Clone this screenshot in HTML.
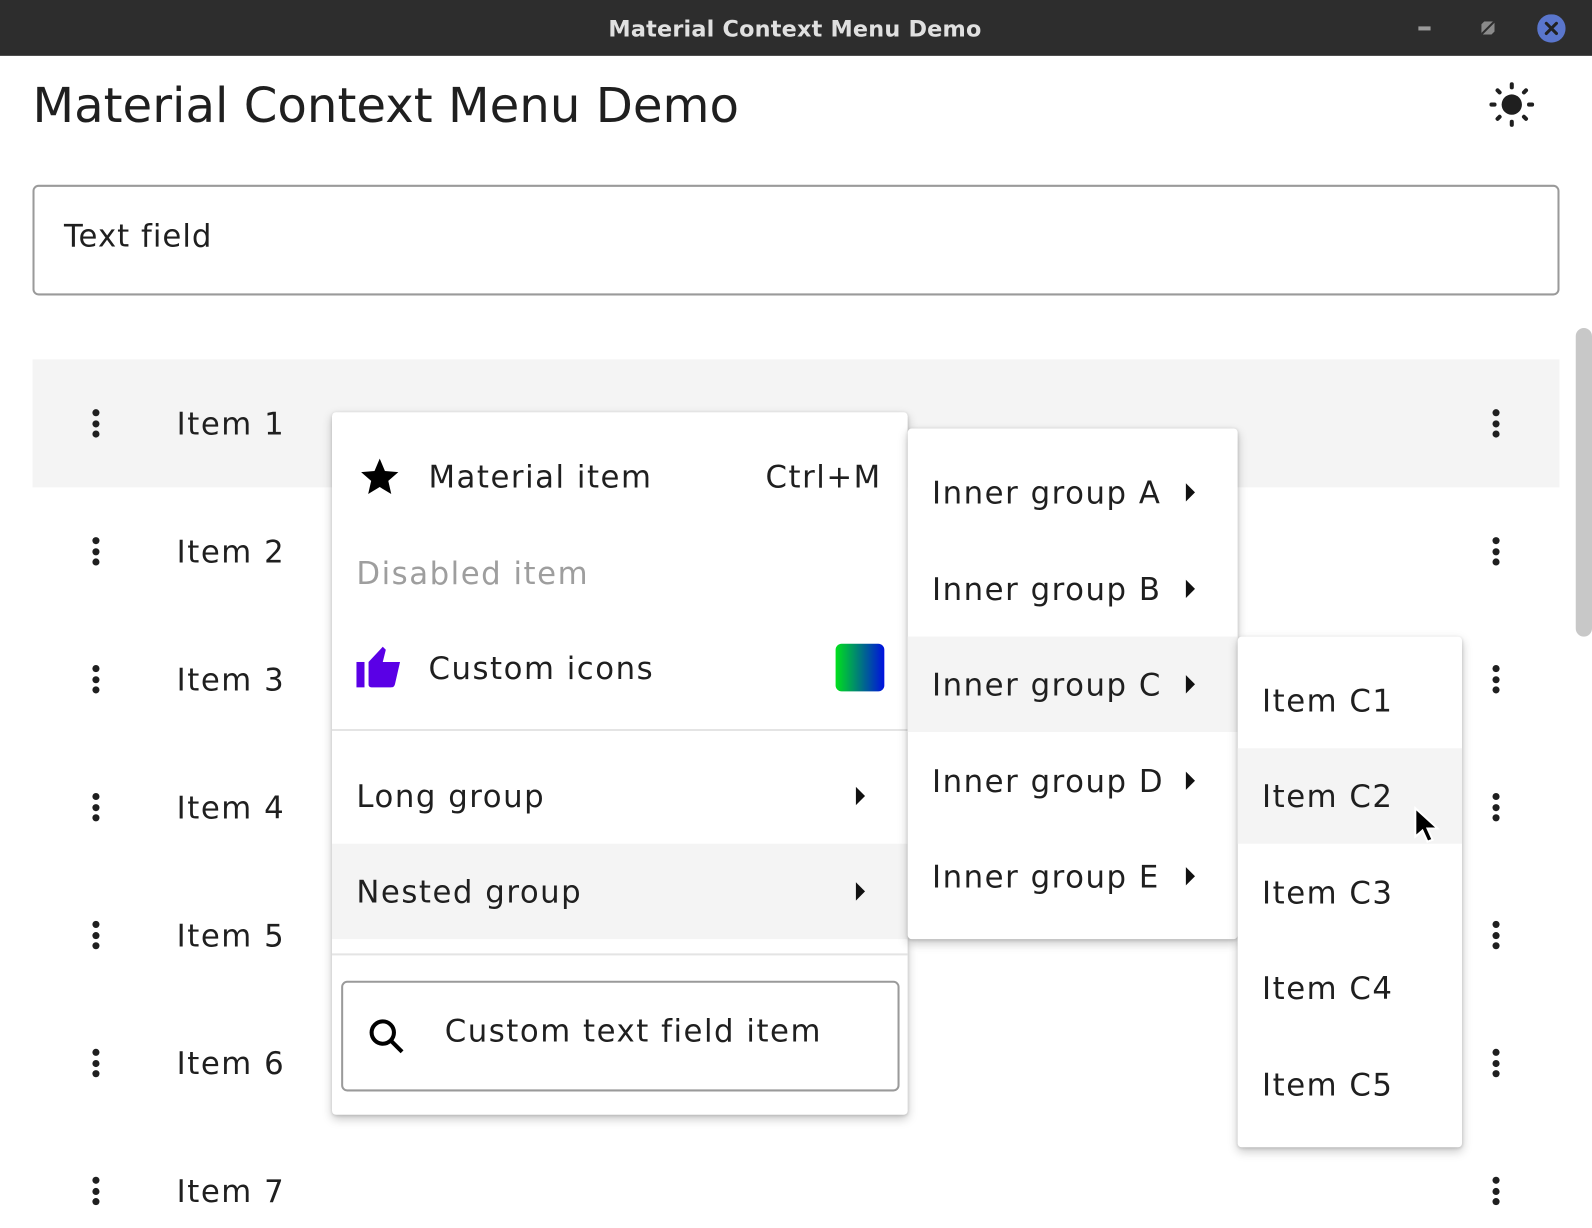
<!DOCTYPE html>
<html><head><style>
*{margin:0;padding:0;box-sizing:border-box}
html,body{width:1592px;height:1228px;overflow:hidden;background:#fff}
body{font-family:"DejaVu Sans","Liberation Sans",sans-serif;color:#1f1f1f;position:relative}
#w{position:absolute;left:0;top:0;width:1568px;height:1210px;transform:scale(1.0153);transform-origin:0 0}
.a{position:absolute}
.t{font-size:30.3px;letter-spacing:1.5px;white-space:nowrap;margin-top:3px}
.row{position:absolute;left:32px;width:1504px;height:126px}
.keb{position:absolute;width:8px}
.keb i{display:block;width:7px;height:7px;border-radius:50%;background:#1f1f1f;margin:0 0 3.5px}
.menu{position:absolute;background:#fff;border-radius:4px;box-shadow:0 4px 10px rgba(0,0,0,.22),0 1px 3px rgba(0,0,0,.15)}
.arr{position:absolute;width:0;height:0;border-top:9px solid transparent;border-bottom:9px solid transparent;border-left:9px solid #111}
</style></head><body><div id="w">
<div class="a" style="left:0;top:0;width:1600px;height:55px;background:#2d2d2d;"></div>
<div class="a" style="left:0;top:17px;width:1566px;text-align:center;color:#e0e0e0;font-size:22px;font-weight:bold;letter-spacing:.2px">Material Context Menu Demo</div>
<div class="a" style="left:1397px;top:26px;width:12px;height:4px;background:#9a9a9a"></div>
<svg class="a" style="left:1459px;top:21px" width="13" height="13"><polygon points="0,3 3,0 13,0 13,10 10,13 0,13" fill="#8a8a8a"/><line x1="0" y1="13" x2="13" y2="0" stroke="#2d2d2d" stroke-width="2"/></svg>
<svg class="a" style="left:1514px;top:14px" width="28" height="28"><circle cx="14" cy="14" r="14" fill="#5a76cc"/><path d="M9 9L19 19M19 9L9 19" stroke="#222" stroke-width="3" stroke-linecap="round"/></svg>

<div class="a" style="left:32px;top:77px;font-size:47.5px;color:#1f1f1f;white-space:nowrap">Material Context Menu Demo</div>
<svg class="a" style="left:1466px;top:80px" width="46" height="46" viewBox="0 0 46 46"><circle cx="23" cy="23" r="10" fill="#1f1f1f"/><g stroke="#1f1f1f" stroke-width="4" stroke-linecap="round"><path d="M23 3v3M23 40v3M3 23h3M40 23h3M9 9l2 2M35 35l2 2M37 9l-2 2M9 37l2-2"/></g></svg>

<div class="a" style="left:32px;top:182px;width:1504px;height:109px;border:2px solid #9a9a9a;border-radius:6px"></div>
<div class="a t" style="left:63px;top:213px;letter-spacing:1px">Text field</div>

<div class="a" style="left:1552px;top:323px;width:16px;height:304px;background:#c8c8c8;border-radius:8px"></div>

<div class="row" style="top:354px;background:#f4f4f4"></div>
<div id="rows"></div>
<script>
var h='';for(var i=0;i<7;i++){var c=417+126*i;
h+='<div class="keb" style="left:91px;top:'+(c-14)+'px"><i></i><i></i><i></i></div>';
h+='<div class="keb" style="left:1470px;top:'+(c-14)+'px"><i></i><i></i><i></i></div>';
h+='<div class="a t" style="left:174px;top:'+(c-19)+'px">Item '+(i+1)+'</div>';}
document.getElementById('rows').innerHTML=h;
</script>

<div class="menu" style="left:327px;top:406px;width:567px;height:692px">
<svg class="a" style="left:24px;top:42px" width="46" height="44" viewBox="0 0 24 24"><path d="M12 17.3l6.2 3.7-1.6-7 5.4-4.7-7.2-.6L12 2 9.2 8.7 2 9.3l5.4 4.7-1.6 7z" fill="#000"/></svg>
<div class="a t" style="left:95px;top:44px">Material item</div>
<div class="a t" style="left:427px;top:44px">Ctrl+M</div>
<div class="a t" style="left:24px;top:139px;color:#9e9e9e">Disabled item</div>
<svg class="a" style="left:24px;top:229px" width="46" height="44" viewBox="0 0 46 44"><rect x="0" y="17" width="8" height="25" fill="#5a00e6"/><path d="M12 17L26 2l3 3-3 12h17l-5 22c-1 3-2 3-4 3H15c-2 0-3-1-3-3z" fill="#5a00e6"/></svg>
<div class="a t" style="left:95px;top:233px">Custom icons</div>
<div class="a" style="left:496px;top:228px;width:48px;height:47px;border-radius:6px;background:linear-gradient(90deg,#00e01c,#0010e0)"></div>
<div class="a" style="left:0;top:312px;width:567px;height:2px;background:#e4e4e4"></div>
<div class="a t" style="left:24px;top:359px">Long group</div>
<div class="arr" style="left:516px;top:369px"></div>
<div class="a" style="left:0;top:425px;width:567px;height:94px;background:#f4f4f4"></div>
<div class="a t" style="left:24px;top:453px">Nested group</div>
<div class="arr" style="left:516px;top:463px"></div>
<div class="a" style="left:0;top:533px;width:567px;height:2px;background:#e4e4e4"></div>
<div class="a" style="left:9px;top:560px;width:550px;height:109px;border:2px solid #9a9a9a;border-radius:6px"></div>
<svg class="a" style="left:34px;top:595px" width="40" height="40" viewBox="0 0 40 40"><circle cx="16" cy="16" r="11" fill="none" stroke="#000" stroke-width="4"/><path d="M24 24l11 11" stroke="#000" stroke-width="4"/></svg>
<div class="a t" style="left:111px;top:590px">Custom text field item</div>
</div>

<div class="menu" style="left:894px;top:422px;width:325px;height:503px">
<div class="a" style="left:0;top:205px;width:325px;height:94px;background:#f4f4f4"></div>
<div class="a t" style="left:24px;top:44px">Inner group A</div>
<div class="a t" style="left:24px;top:139px">Inner group B</div>
<div class="a t" style="left:24px;top:233px">Inner group C</div>
<div class="a t" style="left:24px;top:328px">Inner group D</div>
<div class="a t" style="left:24px;top:422px">Inner group E</div>
<div class="arr" style="left:274px;top:54px"></div>
<div class="arr" style="left:274px;top:149px"></div>
<div class="arr" style="left:274px;top:243px"></div>
<div class="arr" style="left:274px;top:338px"></div>
<div class="arr" style="left:274px;top:432px"></div>
</div>

<div class="menu" style="left:1219px;top:627px;width:221px;height:503px">
<div class="a" style="left:0;top:110px;width:221px;height:94px;background:#f4f4f4"></div>
<div class="a t" style="left:24px;top:44px">Item C1</div>
<div class="a t" style="left:24px;top:138px">Item C2</div>
<div class="a t" style="left:24px;top:233px">Item C3</div>
<div class="a t" style="left:24px;top:327px">Item C4</div>
<div class="a t" style="left:24px;top:422px">Item C5</div>
</div>
<svg class="a" style="left:1392px;top:794px" width="30" height="38" viewBox="0 0 30 38"><path d="M2 2v28l7-6 5 11 5-2-5-11h10z" fill="#000" stroke="#fff" stroke-width="2"/></svg>
</div></body></html>
